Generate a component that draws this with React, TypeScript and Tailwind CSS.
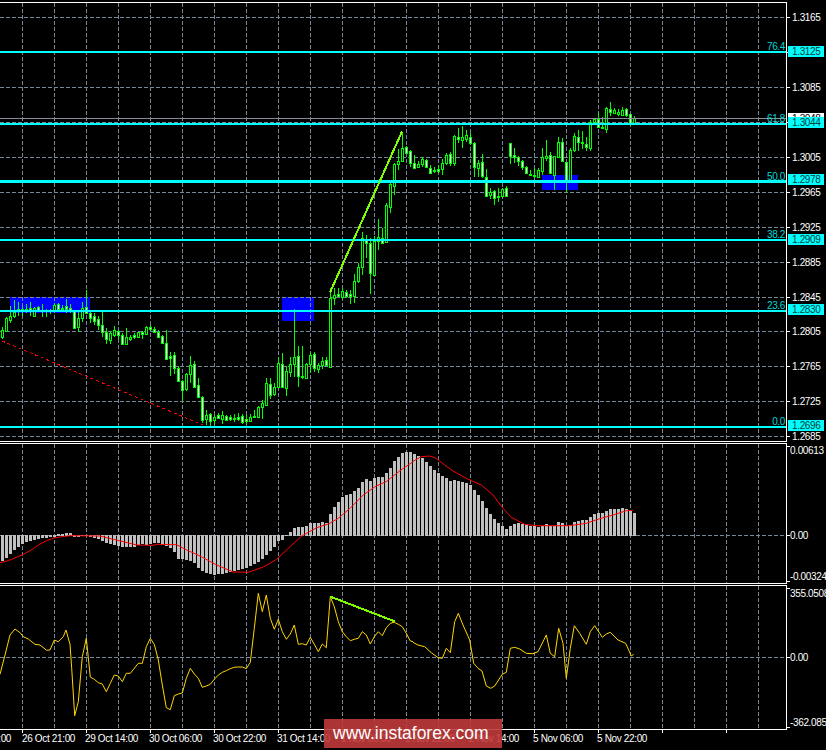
type C = [number, number, number, number, number];
// candle rows are read in crop units: y = base + v / 3
const c1: C[] = [
[140,178,150,172,0],[112,155,114,152,0],[78,128,108,120,0],[60,115,95,107,0],[65,108,88,92,1],[82,108,88,92,1],[72,100,88,92,1],[67,107,85,93,1],[82,110,85,107,0],[78,95,82,90,1],
[72,110,90,94,1],[88,110,90,94,1],[88,102,90,93,1],[68,100,75,90,0],[70,90,73,88,1],[75,95,85,88,1],[58,100,78,88,1],[72,98,85,90,1],[90,145,92,145,1],[90,155,113,142,0],
[67,125,85,113,0],[30,100,82,100,1],[95,130,100,114,1],[100,135,108,122,1],[108,150,118,135,1],[95,170,135,155,1],[145,192,155,178,1],[152,192,158,180,0],[138,170,150,165,0],[150,178,154,165,1],
[160,195,165,192,1],[145,192,172,192,0],[165,182,170,176,0],[160,178,165,170,1],[155,170,156,170,0],[152,178,155,162,1],[137,162,142,162,0],[135,152,141,148,1],[142,160,146,155,1],[150,172,155,170,1],
[165,192,168,190,1],[150,240,190,236,1],[215,288,228,233,1],[215,282,226,264,1],[258,305,264,303,1],[300,362,303,330,1],[278,332,282,328,0],[228,310,256,283,0],[243,322,253,320,1],[293,352,316,352,1],
[348,430,352,420,1],[390,435,405,416,0],[398,440,403,422,1],[405,432,412,420,0],[398,418,406,414,1],[392,432,406,417,0],[405,422,408,420,1],[405,422,410,416,1],[403,425,413,418,1],[398,422,410,416,1],
[403,432,408,425,1],[405,432,418,422,1],[403,422,411,423,0],[390,415,407,411,1],[378,410,380,410,0],[360,418,370,380,0],[295,378,310,375,0],[295,358,313,345,1],[310,348,320,342,0],[230,322,250,320,0],
[220,322,252,320,1],[258,348,274,323,0],[232,290,252,275,0],[88,290,232,252,0],[198,322,228,288,1],[198,296,288,292,1],[250,298,252,295,0],[215,280,225,252,0],[215,275,222,264,1],[250,278,256,266,0],
[232,268,243,256,0],[232,258,240,255,1],
];
const c2: C[] = [
[565,800,595,800,0],[565,615,585,595,0],[565,590,583,587,1],[565,598,573,590,0],[570,595,577,589,1],[570,612,582,587,1],[522,610,543,588,0],[490,550,502,543,0],[397,525,415,500,0],[405,475,420,430,1],
[415,582,428,520,1],[408,525,422,524,0],[358,450,412,422,0],[385,432,415,428,1],[310,428,316,425,0],[250,338,253,320,0],[190,285,192,257,0],[148,210,183,192,0],[95,185,145,183,0],[137,162,142,158,1],
[150,200,154,188,1],[165,205,190,203,1],[182,205,192,200,0],[172,200,178,192,0],[178,202,180,200,1],[195,222,203,218,1],[200,220,210,214,1],[195,218,207,212,1],[178,225,190,207,0],[160,195,165,190,0],
[155,197,163,190,1],[105,197,108,190,0],[85,130,112,116,1],[78,145,112,120,0],[90,125,106,116,0],[100,135,110,128,1],[125,232,130,200,1],[180,232,190,204,0],[162,235,187,227,1],[207,288,230,287,1],
[265,298,275,285,0],[270,315,272,293,1],[265,305,288,290,1],[265,290,268,288,0],[258,292,265,287,1],[130,192,130,168,1],[145,190,165,170,1],[168,198,172,182,1],[180,210,184,200,1],[198,222,202,220,1],
[210,225,222,224,1],[205,235,224,226,1],[205,235,210,232,0],[145,225,172,213,0],[120,182,168,175,0],[155,222,166,220,1],[168,270,168,225,0],[112,172,127,170,0],[115,185,127,184,1],[185,278,187,240,1],
[145,240,150,240,0],[100,155,108,150,0],[90,152,112,125,1],[93,148,127,130,1],[112,152,133,140,1],[60,152,67,143,0],[55,70,58,65,0],[40,80,57,80,1],[52,88,81,85,1],[22,98,25,87,0],
[6,48,28,36,1],[25,42,30,38,0],[28,48,35,42,0],[22,48,31,45,0],[25,50,28,46,1],[42,77,43,72,1],[48,72,55,70,0],
];
const candles = [
  ...c1.map((d, i) => ({ i, d, b: 280 })),
  ...c2.map((d, i) => ({ i: i + 82, d, b: 100 })),
];

const hist = [362,354,342,330,320,312,307,303,300,297,295,293,292,291,283,282,280,279,290,291,288,286,290,293,298,304,309,312,315,318,320,320,320,320,315,313,316,312,310,310,314,318,323,337,357,358,359,362,370,384,392,398,402,404,403,401,398,396,394,391,388,384,378,372,366,357,345,333,320,304,300,288,276,264,261,261,258,250,250,250,246,250,222,201,186,171,165,162,152,144,126,117,122,114,111,111,98,84,64,50,40,35,36,42,48,55,66,78,90,100,108,113,122,120,122,126,128,135,150,165,183,205,222,237,250,258,266,258,251,248,251,254,258,259,260,257,253,257,257,246,250,258,255,246,243,240,240,232,222,219,219,213,207,207,207,204,207,212,218];

const sigA = [[0,368],[25,362],[70,343],[90,332],[120,312],[140,302],[165,293],[210,287],[300,288],[340,298],[410,315],[460,316],[470,313],[530,314],[560,330],[600,348],[650,375],[700,396],[745,397],[790,381],[830,358],[870,320],[905,288],[950,263],[985,252],[1015,235],[1050,205],[1090,165],[1125,140],[1160,124],[1200,92],[1239,65]];
const sigB = [[0,64],[25,50],[50,48],[70,55],[95,75],[120,93],[160,115],[205,135],[240,165],[270,205],[295,232],[335,253],[370,257],[470,257],[520,250],[560,236],[600,225],[640,212],[660,211]];
const cciA = [[0,268],[15,210],[30,150],[45,132],[60,143],[70,155],[85,162],[105,178],[120,180],[140,196],[150,195],[163,165],[175,170],[190,155],[198,135],[210,178],[215,250],[224,392],[235,350],[247,215],[259,160],[271,276],[283,283],[295,293],[307,297],[319,320],[331,295],[343,270],[355,273],[367,290],[379,265],[391,265],[415,235],[427,235],[439,185],[451,160],[463,178],[475,225],[487,300],[499,368],[511,374],[523,332],[535,327],[547,324],[559,280],[571,250],[583,267],[595,280],[607,307],[619,303],[631,298],[643,283],[655,270],[667,262],[679,257],[691,251],[703,247],[715,246],[727,246],[739,251],[751,232],[763,130],[775,25],[787,80],[799,30],[811,100],[823,133],[835,103],[847,140],[859,163],[871,147],[883,120],[895,178],[907,176],[919,180],[931,157],[943,178],[955,200],[967,177],[979,188],[991,35],[1003,65],[1015,110],[1027,140],[1039,155],[1051,167],[1063,163],[1075,160],[1087,140],[1099,150],[1111,177],[1123,155],[1135,140],[1147,152],[1159,128],[1171,115],[1183,112],[1195,118],[1207,125],[1219,145],[1231,168],[1239,170]];
const cciB = [[0,172],[15,180],[35,185],[55,203],[75,218],[88,220],[100,190],[112,203],[125,110],[136,85],[150,120],[170,165],[182,235],[195,250],[207,258],[220,303],[233,310],[245,303],[268,268],[280,262],[292,190],[305,187],[320,192],[340,205],[360,206],[375,200],[400,150],[412,205],[425,215],[437,130],[450,175],[460,280],[472,190],[484,122],[500,145],[520,178],[532,140],[545,122],[568,157],[580,147],[592,142],[615,165],[638,175],[655,213],[662,208]];
const pts = (a: number[][], x0: number, y0: number) => a.map(([x, y]) => (x0 + x / 3).toFixed(1) + "," + (y0 + y / 3).toFixed(1)).join(" ");

const vx = Array.from({ length: 24 }, (_, i) => 22.5 + 32 * i);
const levels = ["1.3165","","1.3085","","1.3005","1.2965","1.2925","1.2885","1.2845","1.2805","1.2765","1.2725","1.2685"];
const hy = levels.map((_, i) => Math.round(17.3 + 34.91 * i) + 0.5);
const fibs = [
  { y: 51, h: 2, name: "76.4", val: "1.3125", by: 46, ty: 50 },
  { y: 123, h: 2, name: "61.8", val: "1.3044", by: 117, ty: 122 },
  { y: 180, h: 3, name: "50.0", val: "1.2978", by: 174, ty: 180 },
  { y: 239, h: 2, name: "38.2", val: "1.2909", by: 234, ty: 238 },
  { y: 310, h: 2, name: "23.6", val: "1.2830", by: 304, ty: 309 },
  { y: 426, h: 2, name: "0.0", val: "1.2696", by: 420, ty: 425 },
];
const dates: [number, string][] = [[-42,"26 Oct 13:00"],[22,"26 Oct 21:00"],[85,"29 Oct 14:00"],[149,"30 Oct 06:00"],[213,"30 Oct 22:00"],[277,"31 Oct 14:00"],[341,"1 Nov 06:00"],[405,"1 Nov 22:00"],[469,"2 Nov 14:00"],[533,"5 Nov 06:00"],[597,"5 Nov 22:00"]];

const Grid = ({ top, bottom }: { top: number; bottom: number }) => (
  <g stroke="#778899" strokeDasharray="4 2" shapeRendering="crispEdges">
    {vx.map((x) => <line key={x} x1={x} x2={x} y1={top} y2={bottom} />)}
  </g>
);

export default function App() {
  const svgCls = "block w-[826px] shrink-0 font-['Liberation_Sans',sans-serif] text-[10px] tracking-[-0.35px]";
  return (
    <div className="relative flex h-[750px] w-[826px] flex-col overflow-hidden bg-black">
      {/* price pane */}
      <svg viewBox="0 0 826 442" className={svgCls + " h-[442px]"}>
        <rect x="10" y="297" width="80" height="16" fill="#0000ff" />
        <rect x="282" y="297" width="32" height="24" fill="#0000ff" />
        <rect x="542" y="175" width="36" height="15" fill="#0000ff" />
        <Grid top={3} bottom={441} />
        <g stroke="#778899" strokeDasharray="4 2" shapeRendering="crispEdges">
          {hy.map((y) => <line key={y} x1="0" x2="786" y1={y} y2={y} />)}
        </g>
        <polyline points="2,341 203,425" fill="none" stroke="#ff0000" strokeDasharray="3 3" shapeRendering="crispEdges" />
        <g shapeRendering="crispEdges">
          {candles.map(({ i, d, b }) => {
            const [hi, lo, top, bot, w] = d;
            const Y = (v: number) => Math.round(b + v / 3);
            const t = Y(top), e = Math.max(Y(bot), t + 1);
            return (
              <g key={i}>
                <rect x={2 + 4 * i} y={Y(hi)} width="1" height={Math.max(Y(lo) - Y(hi), 1)} fill="#00ff00" />
                <rect x={1 + 4 * i} y={t} width="3" height={e - t + 1} fill="#00ff00" />
                {e - t > 1 && <rect x={2 + 4 * i} y={t + 1} width="1" height={e - t - 1} fill={w ? "#ffffff" : "#000000"} />}
              </g>
            );
          })}
        </g>
        <line x1="0" x2="786" y1="118.5" y2="118.5" stroke="#8a9099" shapeRendering="crispEdges" />
        <g fill="#00ffff" shapeRendering="crispEdges">
          {fibs.map((f) => <rect key={f.name} x="0" y={f.y} width="786" height={f.h} />)}
        </g>
        <line x1="330" y1="292.5" x2="402" y2="131.5" stroke="#7fff00" strokeWidth="2" shapeRendering="crispEdges" />
        <rect x="0" y="2" width="787" height="1" fill="#ffffff" shapeRendering="crispEdges" />
        <rect x="786" y="2" width="1" height="440" fill="#ffffff" shapeRendering="crispEdges" />
        <rect x="0" y="441" width="787" height="1" fill="#ffffff" shapeRendering="crispEdges" />
        <g fill="#ffffff" shapeRendering="crispEdges">
          {hy.map((y) => <rect key={y} x="787" y={y - 0.5} width="3" height="1" />)}
        </g>
        <g className="fill-white">
          {levels.map((t, i) => t && <text key={t} x="792" y={hy[i] + 3.5}>{t}</text>)}
        </g>
        <rect x="788" y="113" width="36" height="6" fill="#ffffff" shapeRendering="crispEdges" />
        <text x="792" y="122" fill="#000000">1.3048</text>
        {fibs.map((f) => (
          <g key={f.val}>
            <text x="785" y={f.ty} textAnchor="end" fill="#00d8d8">{f.name}</text>
            <rect x="788" y={f.by} width="36" height="11" fill="#00ffff" shapeRendering="crispEdges" />
            <text x="792" y={f.by + 9} fill="#0b3a3a">{f.val}</text>
          </g>
        ))}
      </svg>

      {/* MACD pane */}
      <svg viewBox="0 442 826 142" className={svgCls + " h-[142px]"}>
        <Grid top={444} bottom={584} />
        <line x1="0" x2="786" y1="535.5" y2="535.5" stroke="#778899" strokeDasharray="4 2" shapeRendering="crispEdges" />
        <g fill="#c0c0c0" shapeRendering="crispEdges">
          {hist.map((h, i) => {
            const v = Math.round(440 + h / 3);
            const top = Math.min(v, 535), bot = Math.max(v, 536);
            return <rect key={i} x={1 + 4 * i} y={top} width="3" height={bot - top} />;
          })}
        </g>
        <polyline points={pts(sigA, 0, 440)} fill="none" stroke="#ff0000" />
        <polyline points={pts(sigB, 413, 440)} fill="none" stroke="#ff0000" />
        <g fill="#ffffff" shapeRendering="crispEdges">
          <rect x="0" y="443" width="787" height="1" />
          <rect x="786" y="443" width="1" height="141" />
          <rect x="0" y="583" width="787" height="1" />
          <rect x="787" y="446" width="3" height="1" />
          <rect x="787" y="535" width="3" height="1" />
          <rect x="787" y="581" width="3" height="1" />
        </g>
        <g className="fill-white">
          <text x="790" y="454">0.00613</text>
          <text x="790" y="539">0.00</text>
          <text x="790" y="580">-0.00324</text>
        </g>
      </svg>

      {/* CCI pane and time axis */}
      <svg viewBox="0 584 826 166" className={svgCls + " h-[166px]"}>
        <Grid top={586} bottom={729} />
        <line x1="0" x2="786" y1="657.5" y2="657.5" stroke="#778899" strokeDasharray="4 2" shapeRendering="crispEdges" />
        <polyline points={pts(cciA, 0, 585)} fill="none" stroke="#ffd700" />
        <polyline points={pts(cciB, 413, 585)} fill="none" stroke="#ffd700" />
        <line x1="330" y1="596.5" x2="395" y2="621.5" stroke="#7fff00" strokeWidth="2" shapeRendering="crispEdges" />
        <g fill="#ffffff" shapeRendering="crispEdges">
          <rect x="0" y="585" width="787" height="1" />
          <rect x="786" y="585" width="1" height="145" />
          <rect x="0" y="729" width="787" height="1" />
          <rect x="787" y="588" width="3" height="1" />
          <rect x="787" y="657" width="3" height="1" />
          <rect x="787" y="727" width="3" height="1" />
          {vx.filter((_, i) => i % 2 === 0).map((x) => <rect key={x} x={x - 0.5} y="730" width="1" height="3" />)}
        </g>
        <g className="fill-white">
          <text x="790" y="597">355.0508</text>
          <text x="790" y="661">0.00</text>
          <text x="790" y="726">-362.085</text>
          {dates.map(([x, t]) => <text key={t} x={x} y="742">{t}</text>)}
        </g>
      </svg>

      {/* watermark */}
      <div className="absolute left-[324px] top-[719px] flex h-[29px] w-[178px] items-center bg-[#c03a3a]/90 pl-[9px] font-['Liberation_Sans',sans-serif] text-[17.5px] leading-none text-white">
        www.instaforex.com
      </div>
    </div>
  );
}
